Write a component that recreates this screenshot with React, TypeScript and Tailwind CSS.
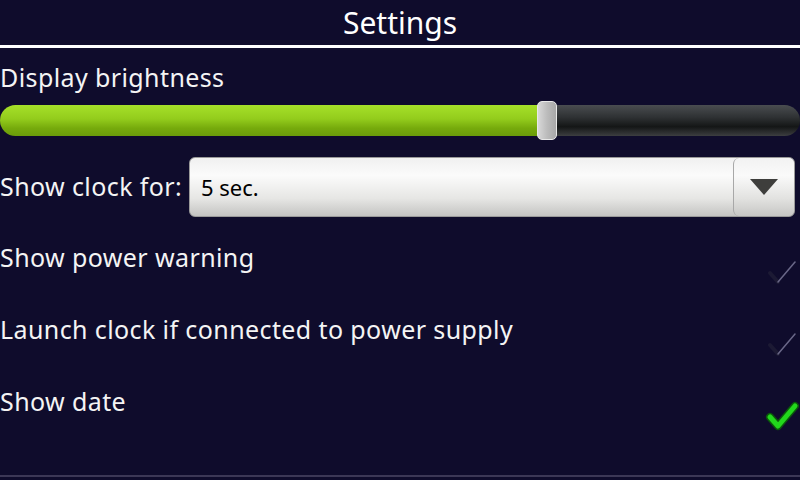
import React from 'react';

const font = { fontFamily: '"Noto Sans", "Open Sans", sans-serif' };

function Check({ on }: { on: boolean }) {
  if (on) {
    return (
      <svg width="34" height="32" viewBox="0 0 34 32">
        <path d="M5 17 L13 26 L30 6" fill="none" stroke="#0a5a0a" strokeWidth="8" strokeLinecap="round" strokeLinejoin="round" />
        <path d="M5 17 L13 26 L30 6" fill="none" stroke="#22d81c" strokeWidth="5" strokeLinecap="round" strokeLinejoin="round" />
      </svg>
    );
  }
  return (
    <svg width="34" height="32" viewBox="0 0 34 32">
      <path d="M5 17 L13 26" fill="none" stroke="#1c1a34" strokeWidth="4" strokeLinecap="round" />
      <path d="M13 26 L30 6" fill="none" stroke="#6a6888" strokeWidth="1.5" strokeLinecap="round" />
    </svg>
  );
}

function CheckRow({ label, on }: { label: string; on: boolean }) {
  return (
    <div className="flex justify-between h-[72px]">
      <div className="text-[25px] tracking-[0.4px] leading-[30px] pt-[1px]">{label}</div>
      <div className="pt-[15px] pr-[1px]">
        <Check on={on} />
      </div>
    </div>
  );
}

export default function App() {
  const value = 547;
  return (
    <div className="w-[800px] h-[480px] bg-[#0f0c2c] text-[#f4f4f4] flex flex-col overflow-hidden" style={font}>
      <div className="h-[45px] flex items-center justify-center text-[30px] text-white">Settings</div>
      <div className="h-[3px] bg-white" />

      <div className="text-[25px] tracking-[0.4px] leading-[30px] mt-[14px]">Display brightness</div>

      <div className="relative h-[39px] mt-[9px] flex items-center">
        <div className="w-full h-[31px] rounded-full overflow-hidden flex">
          <div
            className="h-full bg-[linear-gradient(to_bottom,#a6e029_0%,#93cc1c_45%,#76aa0c_75%,#6a9c0a_100%)]"
            style={{ width: value }}
          />
          <div className="flex-1 h-full bg-[linear-gradient(to_bottom,#4a4d50_0%,#2e3133_40%,#141616_70%,#3c3e40_100%)]" />
        </div>
        <div
          className="absolute top-0 h-[39px] w-[20px] rounded-[5px] border border-[#e8e8e8] bg-[linear-gradient(to_right,#d8d8d8,#bcbcbc_50%,#a8a8a8)]"
          style={{ left: value - 10 }}
        />
      </div>

      <div className="flex items-center mt-[17px] h-[60px]">
        <div className="text-[25px] tracking-[0.4px] w-[189px]">Show clock for:</div>
        <div className="relative flex h-full w-[606px] rounded-[6px] border border-[#9a9a9a] overflow-hidden bg-[linear-gradient(to_bottom,#f0f0f0_0%,#fbfbfb_30%,#e6e6e4_70%,#c4c4c2_100%)]">
          <div className="flex-1 flex items-center pl-[11px] text-[22px] text-black">5 sec.</div>
          <div className="w-[61px] flex items-center justify-center border-l border-[#a8a8a8] rounded-[6px] bg-[linear-gradient(to_bottom,#f2f2f2_0%,#fafafa_30%,#e2e2e0_70%,#c6c6c4_100%)]">
            <svg width="30" height="18" viewBox="0 0 30 18">
              <path d="M1 1 L29 1 L15 17 Z" fill="#3e3e3c" />
            </svg>
          </div>
        </div>
      </div>

      <div className="mt-[24px] flex flex-col">
        <CheckRow label="Show power warning" on={false} />
        <CheckRow label="Launch clock if connected to power supply" on={false} />
        <CheckRow label="Show date" on={true} />
      </div>

      <div className="mt-auto mb-[3px] h-[2px] bg-[#3c3856]" />
    </div>
  );
}
